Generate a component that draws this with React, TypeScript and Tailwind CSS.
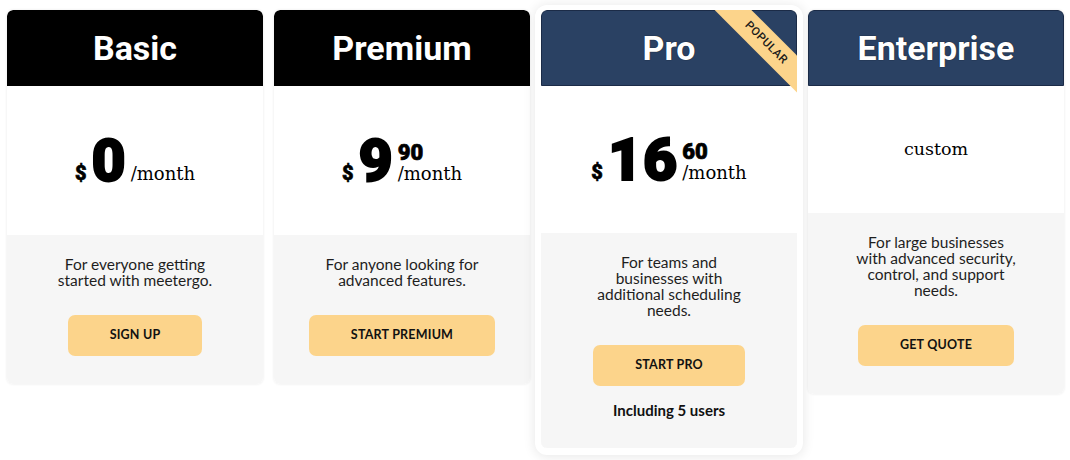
import React from 'react';

type Plan = {
  name: string;
  dark: boolean;
  price?: { whole: string; cents?: string };
  priceH: string;
  desc: React.ReactNode;
  cta: string;
  note?: string;
  popular?: boolean;
};

const plans: Plan[] = [
  {
    name: 'Basic',
    dark: false,
    price: { whole: '0' },
    priceH: 'h-[149px]',
    desc: (<>For everyone getting<br />started with meetergo.</>),
    cta: 'SIGN UP',
  },
  {
    name: 'Premium',
    dark: false,
    price: { whole: '9', cents: '90' },
    priceH: 'h-[149px]',
    desc: (<>For anyone looking for<br />advanced features.</>),
    cta: 'START PREMIUM',
  },
  {
    name: 'Pro',
    dark: true,
    price: { whole: '16', cents: '60' },
    priceH: 'h-[147px]',
    desc: (<>For teams and<br />businesses with<br />additional scheduling<br />needs.</>),
    cta: 'START PRO',
    note: 'Including 5 users',
    popular: true,
  },
  {
    name: 'Enterprise',
    dark: true,
    priceH: 'h-[127px]',
    desc: (<>For large businesses<br />with advanced security,<br />control, and support<br />needs.</>),
    cta: 'GET QUOTE',
  },
];

const Price = ({ whole, cents }: { whole: string; cents?: string }) => (
  <div className="flex items-end justify-center text-black font-['Roboto',sans-serif]">
    <span className="text-[20px] font-black leading-none mb-[1px] [-webkit-text-stroke:0.6px_black]">$</span>
    <span className="text-[59px] font-black leading-[0.8] ml-[5px] tracking-[1px] [-webkit-text-stroke:2px_black]">
      {whole}
    </span>
    <div className="flex flex-col items-start ml-[4px]">
      {cents && (
        <span className="text-[22px] font-black leading-none mb-[1px] [-webkit-text-stroke:0.7px_black]">{cents}</span>
      )}
      <span className="font-['DejaVu_Serif',serif] text-[18px] leading-none mb-[1px]">/month</span>
    </div>
  </div>
);

const Card = ({ plan }: { plan: Plan }) => (
  <div
    className={`relative w-[256px] flex flex-col overflow-hidden rounded-[6px] ${
      plan.popular
        ? 'shadow-[0_1px_0_6px_#fff,0_2px_12px_7px_rgba(0,0,0,0.09)]'
        : 'shadow-[0_0_3px_rgba(0,0,0,0.09)]'
    }`}
  >
    <div
      className={`h-[76px] flex items-center justify-center rounded-t-[6px] text-white text-[34px] font-bold font-['Roboto',sans-serif] [text-shadow:0_0_1px_#000] ${
        plan.dark ? 'bg-[#2a4163] border border-[#1b2b47]' : 'bg-black'
      }`}
    >
      {plan.name}
    </div>
    <div className={`${plan.priceH} bg-white flex items-center justify-center`}>
      {plan.price ? (
        <Price whole={plan.price.whole} cents={plan.price.cents} />
      ) : (
        <span className="font-['DejaVu_Serif',serif] text-[17.5px] text-black">custom</span>
      )}
    </div>
    <div className="bg-[#f6f6f6] flex flex-col items-center pt-[21px] pb-[28px] rounded-b-[6px]">
      <p className="text-center text-[15.5px] leading-[16px] text-[#1e1e1e] font-['Lato',sans-serif] whitespace-nowrap">
        {plan.desc}
      </p>
      <button className="mt-[27px] h-[41px] px-[42px] rounded-[7px] bg-[#fcd48b] text-[12.5px] font-bold text-[#111] font-['Lato',sans-serif] tracking-[0.2px]">
        {plan.cta}
      </button>
      {plan.note && (
        <span className="mt-[13px] -mb-[2px] text-[15px] font-bold text-[#111] font-['Lato',sans-serif]">
          {plan.note}
        </span>
      )}
    </div>
    {plan.popular && (
      <div className="absolute left-[165px] top-[20px] w-[120px] h-[26px] rotate-45 bg-[#fcd48b] flex items-center justify-center text-[11.5px] font-medium tracking-[0.5px] text-[#1a1a1a] font-['Roboto',sans-serif]">
        POPULAR
      </div>
    )}
  </div>
);

export default function App() {
  return (
    <div className="w-[1070px] h-[460px] bg-white flex items-start gap-[11px] pl-[7px] pt-[10px]">
      {plans.map((p) => (
        <Card key={p.name} plan={p} />
      ))}
    </div>
  );
}
